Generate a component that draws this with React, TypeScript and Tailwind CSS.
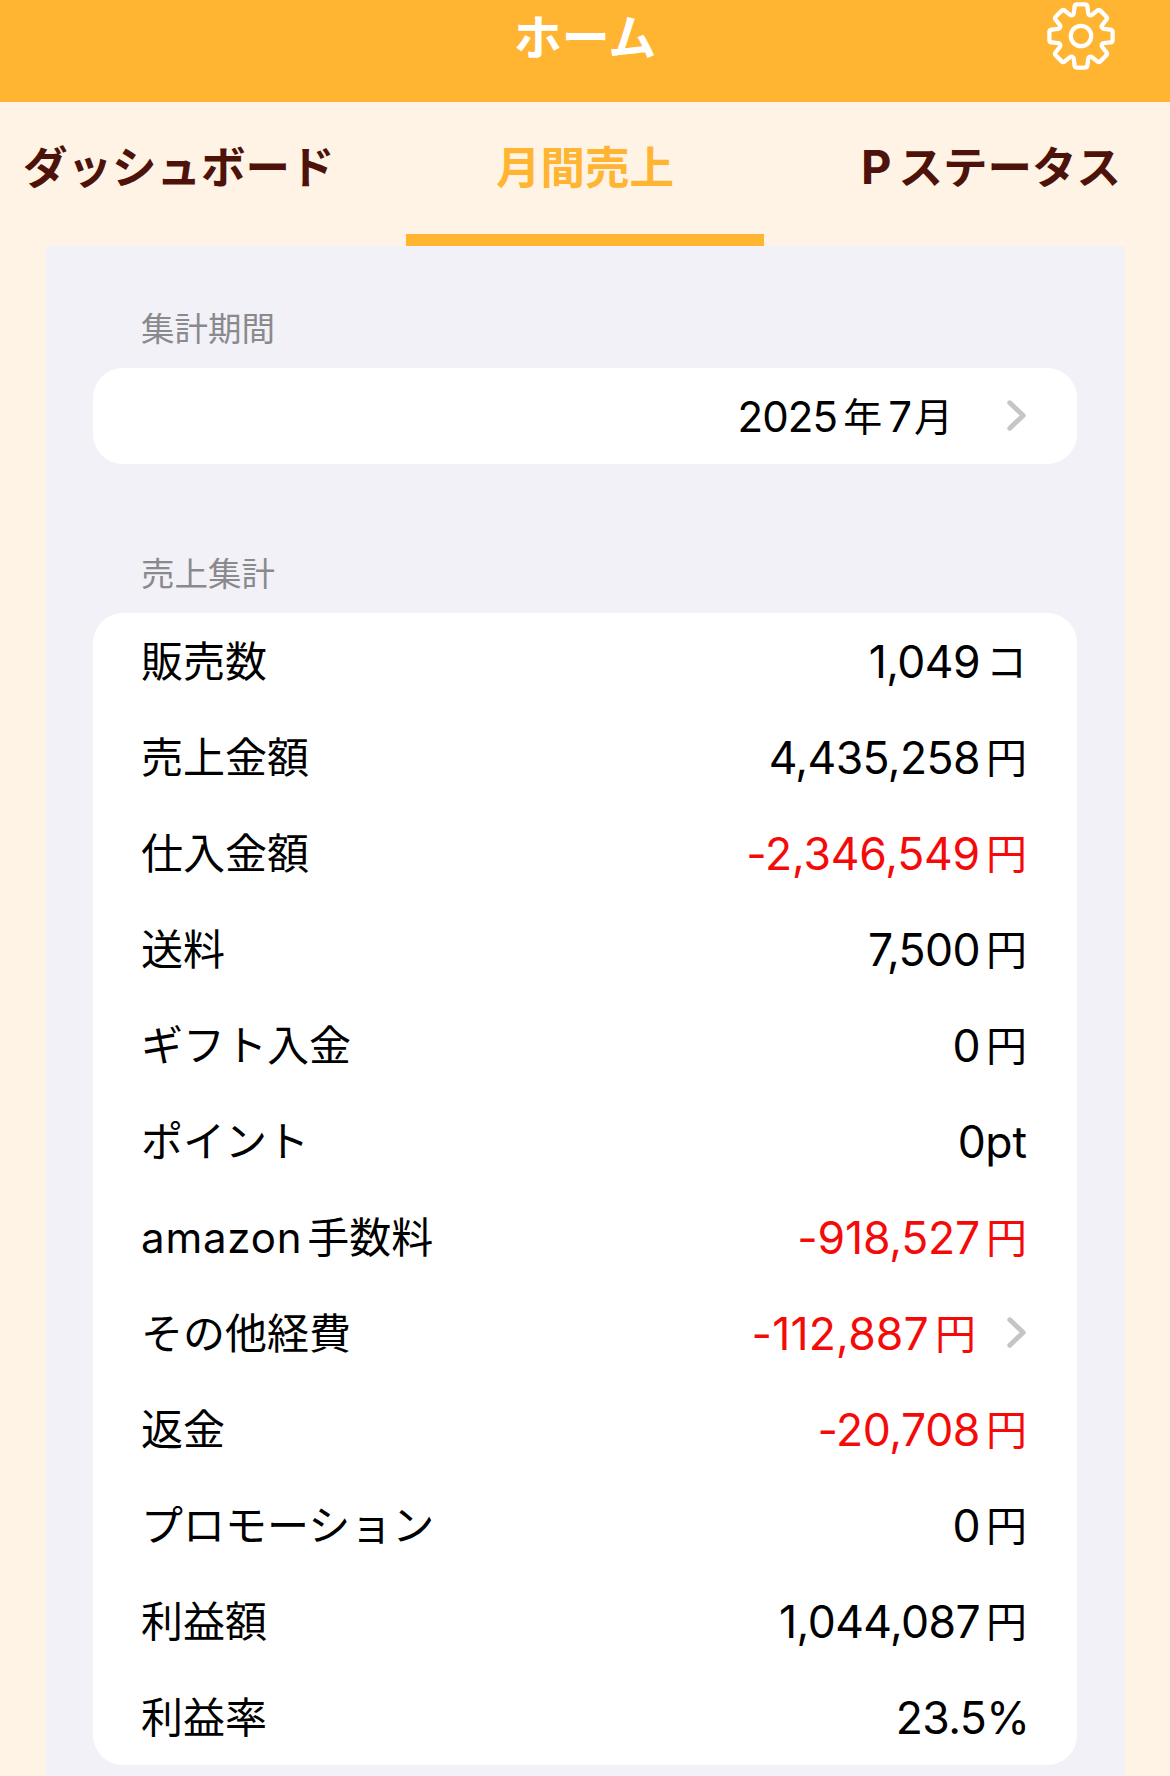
type Row = { label: string; amount: string; unit: string; track?: string; link?: boolean };

const rows: Row[] = [
  { label: "販売数", amount: "1,049", unit: "コ" },
  { label: "売上金額", amount: "4,435,258", unit: "円" },
  { label: "仕入金額", amount: "-2,346,549", unit: "円", track: "tracking-[-0.2px]" },
  { label: "送料", amount: "7,500", unit: "円" },
  { label: "ギフト入金", amount: "0", unit: "円" },
  { label: "ポイント", amount: "0", unit: "pt" },
  { label: "amazon手数料", amount: "-918,527", unit: "円", track: "tracking-[-0.2px]" },
  { label: "その他経費", amount: "-112,887", unit: "円", track: "tracking-[0.2px]", link: true },
  { label: "返金", amount: "-20,708", unit: "円", track: "tracking-[-0.4px]" },
  { label: "プロモーション", amount: "0", unit: "円" },
  { label: "利益額", amount: "1,044,087", unit: "円" },
  { label: "利益率", amount: "23.5", unit: "%" },
];

// Eight-toothed gear outline with softened corners, centred on the origin.
function gearPath() {
  const pts: [number, number][] = [];
  for (let i = 0; i < 8; i++) {
    for (const [r, deg] of [[22.6, -19], [32.2, -11], [32.2, 11], [22.6, 19]]) {
      const a = ((i * 45 + deg) * Math.PI) / 180;
      pts.push([r * Math.sin(a), -r * Math.cos(a)]);
    }
  }
  const toward = (p: [number, number], q: [number, number], d: number) => {
    const k = d / Math.hypot(q[0] - p[0], q[1] - p[1]);
    return `${(p[0] + (q[0] - p[0]) * k).toFixed(2)} ${(p[1] + (q[1] - p[1]) * k).toFixed(2)}`;
  };
  const n = pts.length;
  return (
    pts
      .map((p, i) => {
        const tip = i % 4 === 1 || i % 4 === 2;
        const d = tip ? 2.2 : 1.3;
        const a = toward(p, pts[(i + n - 1) % n], d);
        const b = toward(p, pts[(i + 1) % n], d);
        return `${i ? "L" : "M"}${a}Q${p[0].toFixed(2)} ${p[1].toFixed(2)} ${b}`;
      })
      .join("") + "Z"
  );
}

function Gear() {
  return (
    <svg className="h-[72px] w-[72px]" viewBox="-36 -36 72 72" fill="none" stroke="white" strokeWidth="4.3" strokeLinejoin="round">
      <path d={gearPath()} />
      <circle r="10.2" />
    </svg>
  );
}

function Chevron() {
  return (
    <svg className="h-[32px] w-[20px] shrink-0" viewBox="0 0 20 32" fill="none" stroke="#c5c5c7" strokeWidth="5" strokeLinecap="round" strokeLinejoin="round">
      <path d="M2.8 2.8 16.2 15.5 2.8 28.2" />
    </svg>
  );
}

function SectionTitle({ children }: { children: string }) {
  return <h2 className="pl-[48px] text-[33.5px] leading-[42px] text-[#8a8a8e]">{children}</h2>;
}

export default function App() {
  return (
    <div className="flex h-[1776px] w-[1170px] flex-col overflow-hidden bg-[#fff3e5] font-['Inter','Noto_Sans_CJK_JP',sans-serif] text-black">
      <header className="grid h-[102px] shrink-0 grid-cols-[1fr_auto_1fr] items-start bg-[#ffb432]">
        <span />
        <h1 className="pt-[8px] text-[48px] leading-[60px] font-bold text-white">ホーム</h1>
        <button className="mr-[53px] justify-self-end">
          <Gear />
        </button>
      </header>

      <nav className="grid h-[144px] shrink-0 grid-cols-[406px_358px_406px] text-[44.5px] font-bold text-[#4d120a]">
        <div className="pt-[36px] pl-[23px] leading-[60px] whitespace-nowrap">ダッシュボード</div>
        <div className="border-b-[12px] border-[#ffb432] pt-[36px] text-center leading-[60px] text-[#ffb432]">月間売上</div>
        <div className="pt-[35px] pr-[49px] text-right leading-[60px] whitespace-nowrap">
          <span className="mr-[7px] text-[47px]">P</span>ステータス
        </div>
      </nav>

      <main className="mr-[45px] ml-[46px] grow bg-[#f2f1f8] pr-[48px] pl-[47px]">
        <section className="pt-[62px]">
          <SectionTitle>集計期間</SectionTitle>
          <div className="mt-[18px] flex h-[96px] items-center justify-end rounded-[30px] bg-white pr-[50px] text-[42px]">
            <div className="flex items-center">
              <span className="tracking-[-0.9px]">2025</span>
              <span className="ml-[6px] pt-[2px] text-[39px]">年</span>
              <span className="ml-[6px]">7</span>
              <span className="ml-[2px] pt-[2px] text-[39px]">月</span>
            </div>
            <div className="ml-[54px] flex">
              <Chevron />
            </div>
          </div>
        </section>

        <section className="pt-[89px]">
          <SectionTitle>売上集計</SectionTitle>
          <ul className="mt-[18px] rounded-[30px] bg-white pr-[50px] pl-[48px]">
            {rows.map((r) => {
              const latin = r.unit === "pt" || r.unit === "%";
              return (
                <li key={r.label} className="flex h-[96px] items-center">
                  <span className="grow pt-px text-[42px]">
                    {r.label.startsWith("amazon") ? (
                      <>
                        <span className="mr-[5px] tracking-[0.8px]">amazon</span>手数料
                      </>
                    ) : (
                      r.label
                    )}
                  </span>
                  <span className={`flex items-center pt-[2px] text-[44.5px] ${r.amount.startsWith("-") ? "text-[#f50a0a]" : ""}`}>
                    <span className={r.track ?? "tracking-[-0.6px]"}>{r.amount}</span>
                    {latin ? (
                      <span className={r.unit === "%" ? "-mr-[3px]" : ""}>{r.unit}</span>
                    ) : (
                      <span className="ml-[6px] pt-px text-[41px]">{r.unit}</span>
                    )}
                  </span>
                  {r.link && (
                    <span className="ml-[31px] flex">
                      <Chevron />
                    </span>
                  )}
                </li>
              );
            })}
          </ul>
        </section>
      </main>
    </div>
  );
}
